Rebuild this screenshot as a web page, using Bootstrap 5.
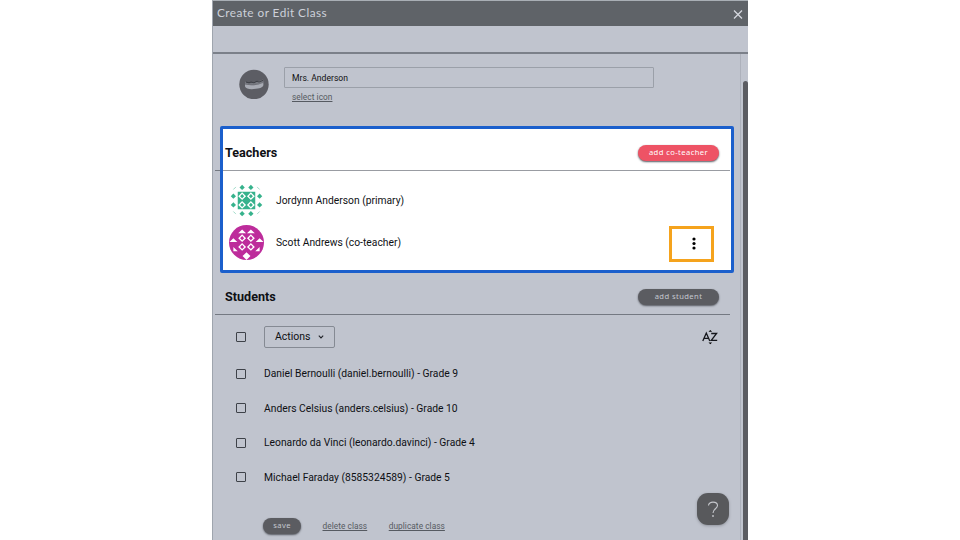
<!DOCTYPE html>
<html lang="en">
<head>
    <meta charset="UTF-8">
    <title>Create or Edit Class</title>
    <link href="https://cdn.jsdelivr.net/npm/bootstrap@5.3.0/dist/css/bootstrap.min.css" rel="stylesheet">
    <style>
        body { font-family: Roboto, "Liberation Sans", sans-serif; font-size: 10.3px; line-height: 14px; color: #0e1014; height: 540px; background: #fff; }
        .class-dialog { width: 536px; height: 540px; background: #c0c4ce; border-left: 1px solid #9fa5ae; border-top: 1px solid #a9afb5; }
        .dialog-head { height: 25px; background: #5f6368; color: #cdd1da; padding: 0 5px 2px 4px; }
        .dialog-title { font-family: Lato, sans-serif; font-size: 11.8px; letter-spacing: .45px; }
        .dialog-strip { height: 28px; border-bottom: 2px solid #7b8089; }
        .dialog-main { width: 528px; height: 486px; border-right: 1px solid #adb1bb; }
        .scroll-track { width: 7px; padding: 27px 0 0 2px; }
        .scroll-thumb { background: #5b5c61; border-radius: 4px 4px 0 0; }
        .identity { height: 72px; padding: 13px 0 0 26px; }
        .class-name { width: 370px; height: 21px; border: 1px solid #9ba0a9; border-radius: 1px; background: transparent; padding: 0 7px; font-size: 8.6px; color: #111; display: block; }
        .plain-link { font-size: 8.3px; line-height: 10px; color: #565a61; letter-spacing: .05px; }
        .plain-link:hover { color: #333; }
        .name-col { margin-left: 15px; }
        .name-col .plain-link { display: inline-block; margin: 4px 0 0 8px; }
        .teachers { height: 147px; margin: 0 6px 0 7px; width: 514px; background: #fff; border: 3px solid #1b5fcc; border-radius: 2px; }
        .section-head { height: 42px; border-bottom: 1px solid #747982; }
        .section-head h2 { font-size: 12.6px; font-weight: 700; line-height: 16px; }
        .teachers .section-head { padding: 7px 11px 0 2px; border-color: #999ca2; margin-right: 1px; position: relative; }
        /* end of the rule that sticks out left of the frame */
        .teachers .section-head::before { content: ""; position: absolute; left: -8px; bottom: -1px; width: 5px; height: 1px; background: #747982; }
        .students .section-head { padding: 7px 11px 0 10px; margin: 0 10px 0 2px; }
        .pill { font-family: "Noto Sans", sans-serif; font-size: 7.6px; line-height: 10px; letter-spacing: .42px; color: #c5c8d0; background: #5b5c61; border: 0; border-radius: 9px; width: 81px; height: 16px; padding: 0 0 2px; box-shadow: 0 1px 2px #55585f; }
        .pill-pink { background: #ee5365; color: #fff; }
        .pill-save { width: 38px; }
        .teacher-row { height: 42px; padding-left: 6px; }
        .teacher-row span { margin: 2px 0 0 12px; }
        .teacher-row svg { flex: none; }
        .more-box { width: 45px; height: 36px; border: 3px solid #f5a31d; margin: 4px 17px 0 0; padding: 0 0 1px 5px; background: #fff; }
        .student-row { height: 34.6px; padding-left: 23px; }
        .student-row span { margin: 1px 0 0 18px; }
        .tick { width: 10px; height: 10px; border: 1px solid #3e4249; border-radius: 1px; margin: 0; appearance: none; background: transparent; }
        .actions-btn { width: 71px; height: 22px; margin-left: 18px; padding: 0 10px; border: 1px solid #858a93; border-radius: 2px; font-size: 10.5px; line-height: 14px; color: #0e1014; }
        .action-row { height: 42px; padding: 2px 22px 0 23px; }
        .student-list { margin-top: -.6px; }
        .foot { padding: 23.6px 0 0 50px; gap: 21.5px; }
        .help-btn { right: 19px; bottom: 15px; width: 32px; height: 32px; border: 0; border-radius: 11px; background: #58595c; box-shadow: 0 1px 3px #90949d; }
    </style>
</head>
<body>
    <div class="class-dialog mx-auto position-relative overflow-hidden">
        <header class="dialog-head d-flex align-items-center justify-content-between">
            <span class="dialog-title">Create or Edit Class</span>
            <svg width="10" height="10" viewBox="0 0 10 10" class="mt-1"><path d="M1 .5l8 8M9 .5l-8 8" stroke="#d5d8df" stroke-width="1.3"/></svg>
        </header>
        <div class="dialog-strip"></div>
        <div class="d-flex">
            <main class="dialog-main">
                <section class="identity d-flex">
                    <svg width="30" height="32" viewBox="0 0 30 32">
                        <circle cx="15" cy="17.5" r="14.7" fill="#5c5d64"/>
                        <path d="M6 14.5Q8 17.5 15 15.5T24 12.5L25 16.5Q19 18.5 6 17.5Z" fill="#777981"/>
                        <path d="M6 17.5Q15 19.5 24 16Q26 20.5 19 21.5Q8 23.5 6 19.5Z" fill="#a8abb4"/>
                        <path d="M7 15l3 .8 2-.8 3 .8 3-1.6 2 .8 4-1.6" fill="none" stroke="#34363c" stroke-width=".8"/>
                    </svg>
                    <div class="name-col">
                        <input class="class-name" value="Mrs. Anderson">
                        <a href="#" class="plain-link">select icon</a>
                    </div>
                </section>

                <section class="teachers">
                    <div class="section-head d-flex align-items-center justify-content-between">
                        <h2 class="m-0">Teachers</h2>
                        <button class="pill pill-pink">add co-teacher</button>
                    </div>
                    <div class="teacher-row d-flex align-items-center mt-2">
                        <svg width="35" height="35" viewBox="0 0 40 40">
                            <defs>
                                <clipPath id="round"><circle cx="20" cy="20" r="20"/></clipPath>
                                <path id="gem" d="M0-3L3 0 0 3-3 0Z"/>
                                <path id="ring" fill="#fff" fill-rule="evenodd" d="M0-4.5L4.5 0 0 4.5-4.5 0ZM0-2.3L-2.3 0 0 2.3 2.3 0Z"/>
                                <g id="rings"><use href="#ring" x="15" y="15"/><use href="#ring" x="25" y="15"/><use href="#ring" x="15" y="25"/><use href="#ring" x="25" y="25"/></g>
                            </defs>
                            <g fill="#36b28c" clip-path="url(#round)">
                                <path d="M10 10h20v20H10z"/>
                                <use href="#rings"/>
                                <use href="#gem" x="15" y="5"/><use href="#gem" x="25" y="5"/><use href="#gem" x="15" y="35"/><use href="#gem" x="25" y="35"/>
                                <use href="#gem" x="5" y="15"/><use href="#gem" x="5" y="25"/><use href="#gem" x="35" y="15"/><use href="#gem" x="35" y="25"/>
                                <path d="M4.5 7.5l3-3M32.5 4.5l3 3M4.5 32.5l3 3M32.5 35.5l3-3" stroke="#36b28c"/>
                            </g>
                        </svg>
                        <span>Jordynn Anderson (primary)</span>
                    </div>
                    <div class="teacher-row d-flex align-items-center">
                        <svg width="35" height="35" viewBox="0 0 40 40">
                            <g clip-path="url(#round)">
                                <path fill="#bd2c9b" d="M0 0h40v40H0z"/>
                                <use href="#rings"/>
                                <path fill="#fff" d="M10.5 9.5l4.5-4.5 4.5 4.5zM20.5 9.5l4.5-4.5 4.5 4.5zM.5 19.5l4.5-4.5 4.5 4.5zM30.5 19.5l4.5-4.5 4.5 4.5zM5 25l5 5H5zM35 25l-5 5h5zM20 31l4.5 4.5L20 40l-4.5-4.5z"/>
                            </g>
                        </svg>
                        <span>Scott Andrews (co-teacher)</span>
                        <div class="more-box ms-auto d-flex align-items-center justify-content-center">
                            <svg width="4" height="13" viewBox="0 0 4 13"><circle cx="2" cy="2" r="1.6"/><circle cx="2" cy="6.5" r="1.6"/><circle cx="2" cy="11" r="1.6"/></svg>
                        </div>
                    </div>
                </section>

                <section class="students">
                    <div class="section-head d-flex align-items-center justify-content-between">
                        <h2 class="m-0">Students</h2>
                        <button class="pill">add student</button>
                    </div>
                    <div class="action-row d-flex align-items-center">
                        <input type="checkbox" class="tick">
                        <button class="actions-btn btn d-flex align-items-center justify-content-between">Actions
                            <svg width="6" height="4" viewBox="0 0 6 4"><path d="M.8.7L3 2.9 5.2.7" fill="none" stroke="#202329" stroke-width="1.1"/></svg>
                        </button>
                        <svg class="ms-auto" width="16" height="16" viewBox="0 0 16 16">
                            <path d="M.8 12L4.3 4 7.8 12M2.1 9.4h4.4M9.2 4.5h5.4L9.3 11.4h5.9" fill="none" stroke="#15171c" stroke-width="1.3"/>
                            <path d="M6.5 2.8l1.8-1.8 1.8 1.8zM6.5 13.4l1.8 1.8 1.8-1.8z"/>
                        </svg>
                    </div>
                    <div class="student-list">
                        <div class="student-row d-flex align-items-center"><input type="checkbox" class="tick"><span>Daniel Bernoulli (daniel.bernoulli) - Grade 9</span></div>
                        <div class="student-row d-flex align-items-center"><input type="checkbox" class="tick"><span>Anders Celsius (anders.celsius) - Grade 10</span></div>
                        <div class="student-row d-flex align-items-center"><input type="checkbox" class="tick"><span>Leonardo da Vinci (leonardo.davinci) - Grade 4</span></div>
                        <div class="student-row d-flex align-items-center"><input type="checkbox" class="tick"><span>Michael Faraday (8585324589) - Grade 5</span></div>
                    </div>
                </section>

                <footer class="foot d-flex align-items-center">
                    <button class="pill pill-save">save</button>
                    <a href="#" class="plain-link">delete class</a>
                    <a href="#" class="plain-link">duplicate class</a>
                </footer>
            </main>
            <div class="scroll-track d-flex"><div class="scroll-thumb w-100"></div></div>
        </div>
        <button class="help-btn position-absolute d-flex align-items-center justify-content-center p-0">
            <svg width="12" height="17" viewBox="0 0 12 17"><path d="M1.5 4.5C1.5 0 10.5 0 10.5 4.6C10.5 8 6 7.5 6 12" fill="none" stroke="#c5c7cc" stroke-width="1.1"/><circle cx="6" cy="15" r=".9" fill="#c5c7cc"/></svg>
        </button>
    </div>
</body>
</html>
